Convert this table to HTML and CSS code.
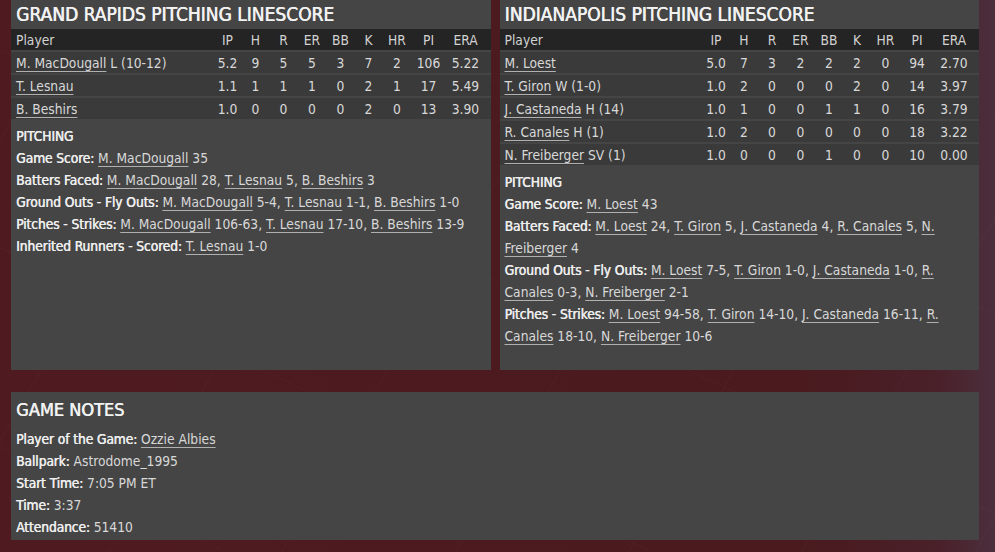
FILE: index.html
```html
<!DOCTYPE html>
<html lang="en">
<head>
<meta charset="utf-8">
<title>Pitching Linescore</title>
<link rel="stylesheet" href="styles.css">
</head>
<body>
<div class="page">
  <div class="top">
    <section class="panel">
      <h2 class="title">GRAND RAPIDS PITCHING LINESCORE</h2>
      <div class="grid head">
        <span class="name">Player</span><span>IP</span><span>H</span><span>R</span><span>ER</span><span>BB</span><span>K</span><span>HR</span><span>PI</span><span>ERA</span>
      </div>
      <div class="grid row">
        <span class="name"><a>M. MacDougall</a> L (10-12)</span><span>5.2</span><span>9</span><span>5</span><span>5</span><span>3</span><span>7</span><span>2</span><span>106</span><span>5.22</span>
      </div>
      <div class="grid row">
        <span class="name"><a>T. Lesnau</a></span><span>1.1</span><span>1</span><span>1</span><span>1</span><span>0</span><span>2</span><span>1</span><span>17</span><span>5.49</span>
      </div>
      <div class="grid row">
        <span class="name"><a>B. Beshirs</a></span><span>1.0</span><span>0</span><span>0</span><span>0</span><span>0</span><span>2</span><span>0</span><span>13</span><span>3.90</span>
      </div>
      <div class="info">
        <p class="label">PITCHING</p>
        <p><b>Game Score:</b> <a>M. MacDougall</a> 35</p>
        <p><b>Batters Faced:</b> <a>M. MacDougall</a> 28, <a>T. Lesnau</a> 5, <a>B. Beshirs</a> 3</p>
        <p><b>Ground Outs - Fly Outs:</b> <a>M. MacDougall</a> 5-4, <a>T. Lesnau</a> 1-1, <a>B. Beshirs</a> 1-0</p>
        <p><b>Pitches - Strikes:</b> <a>M. MacDougall</a> 106-63, <a>T. Lesnau</a> 17-10, <a>B. Beshirs</a> 13-9</p>
        <p><b>Inherited Runners - Scored:</b> <a>T. Lesnau</a> 1-0</p>
      </div>
    </section>
    <section class="panel">
      <h2 class="title">INDIANAPOLIS PITCHING LINESCORE</h2>
      <div class="grid head">
        <span class="name">Player</span><span>IP</span><span>H</span><span>R</span><span>ER</span><span>BB</span><span>K</span><span>HR</span><span>PI</span><span>ERA</span>
      </div>
      <div class="grid row">
        <span class="name"><a>M. Loest</a></span><span>5.0</span><span>7</span><span>3</span><span>2</span><span>2</span><span>2</span><span>0</span><span>94</span><span>2.70</span>
      </div>
      <div class="grid row">
        <span class="name"><a>T. Giron</a> W (1-0)</span><span>1.0</span><span>2</span><span>0</span><span>0</span><span>0</span><span>2</span><span>0</span><span>14</span><span>3.97</span>
      </div>
      <div class="grid row">
        <span class="name"><a>J. Castaneda</a> H (14)</span><span>1.0</span><span>1</span><span>0</span><span>0</span><span>1</span><span>1</span><span>0</span><span>16</span><span>3.79</span>
      </div>
      <div class="grid row">
        <span class="name"><a>R. Canales</a> H (1)</span><span>1.0</span><span>2</span><span>0</span><span>0</span><span>0</span><span>0</span><span>0</span><span>18</span><span>3.22</span>
      </div>
      <div class="grid row">
        <span class="name"><a>N. Freiberger</a> SV (1)</span><span>1.0</span><span>0</span><span>0</span><span>0</span><span>1</span><span>0</span><span>0</span><span>10</span><span>0.00</span>
      </div>
      <div class="info">
        <p class="label">PITCHING</p>
        <p><b>Game Score:</b> <a>M. Loest</a> 43</p>
        <p><b>Batters Faced:</b> <a>M. Loest</a> 24, <a>T. Giron</a> 5, <a>J. Castaneda</a> 4, <a>R. Canales</a> 5, <a>N.</a> <a>Freiberger</a> 4</p>
        <p><b>Ground Outs - Fly Outs:</b> <a>M. Loest</a> 7-5, <a>T. Giron</a> 1-0, <a>J. Castaneda</a> 1-0, <a>R.</a> <a>Canales</a> 0-3, <a>N. Freiberger</a> 2-1</p>
        <p><b>Pitches - Strikes:</b> <a>M. Loest</a> 94-58, <a>T. Giron</a> 14-10, <a>J. Castaneda</a> 16-11, <a>R.</a> <a>Canales</a> 18-10, <a>N. Freiberger</a> 10-6</p>
      </div>
    </section>
  </div>
  <section class="panel notes">
    <h2 class="title big">GAME NOTES</h2>
    <div class="info">
      <p><b>Player of the Game:</b> <a>Ozzie Albies</a></p>
      <p><b>Ballpark:</b> Astrodome_1995</p>
      <p><b>Start Time:</b> 7:05 PM ET</p>
      <p><b>Time:</b> 3:37</p>
      <p><b>Attendance:</b> 51410</p>
    </div>
  </section>
</div>
</body>
</html>
```
FILE: styles.css
```css
html, body {
  margin: 0;
  padding: 0;
}
body {
  width: 995px;
  height: 552px;
  overflow: hidden;
  font-family: "DejaVu Sans Condensed", "Liberation Sans", sans-serif;
  font-size: 13.7px;
  color: #d8d8d8;
  background:
    repeating-linear-gradient(120deg, rgba(255,255,255,0) 0 70px, rgba(255,255,255,0.018) 70px 71px, rgba(255,255,255,0) 71px 150px),
    repeating-linear-gradient(25deg, rgba(255,255,255,0) 0 95px, rgba(255,255,255,0.014) 95px 96px, rgba(255,255,255,0) 96px 180px),
    linear-gradient(to right, #4f1b20 0%, #4a1a1e 80%, #4a2029 94%, #4b2f3c 100%);
}
.page {
  padding: 0 16px 0 11px;
  display: flex;
  flex-direction: column;
  gap: 22px;
}
.top {
  display: flex;
  gap: 9px;
  height: 370px;
}
.top .panel {
  flex: 1;
}
.panel {
  background: #454545;
}
.title {
  margin: 0;
  height: 29px;
  line-height: 29px;
  padding-left: 5px;
  font-size: 19px;
  font-weight: normal;
  color: #f2f2f2;
  text-shadow: 0.6px 0 0 #f2f2f2;
  white-space: nowrap;
}
.grid {
  display: grid;
  grid-template-columns: 1fr 28px 28px 28px 29px 28px 28px 29px 34px 40px;
  padding: 0 5px;
  align-items: center;
}
.grid span {
  text-align: center;
  white-space: nowrap;
}
.grid .name {
  text-align: left;
}
.head {
  height: 21px;
  background: #242424;
  color: #d2d2d2;
  margin-bottom: 2px;
}
.row {
  height: 21px;
  background: #3a3a3a;
  margin-bottom: 2px;
}
a {
  color: inherit;
  text-decoration: underline;
  text-decoration-color: #b0b0b0;
  text-underline-offset: 3px;
}
.info {
  padding: 4px 5px 0;
}
.info p {
  margin: 0;
  line-height: 22px;
}
.info b, .label {
  font-weight: normal;
  color: #eeeeee;
  text-shadow: 0.5px 0 0 #eeeeee;
  letter-spacing: -0.1px;
}
.notes {
  height: 148px;
  box-sizing: border-box;
  padding-top: 2px;
}
.notes .title.big {
  height: 32px;
  line-height: 32px;
  margin-bottom: 2px;
  font-size: 18px;
}
.notes .info {
  padding-top: 0;
}
```
